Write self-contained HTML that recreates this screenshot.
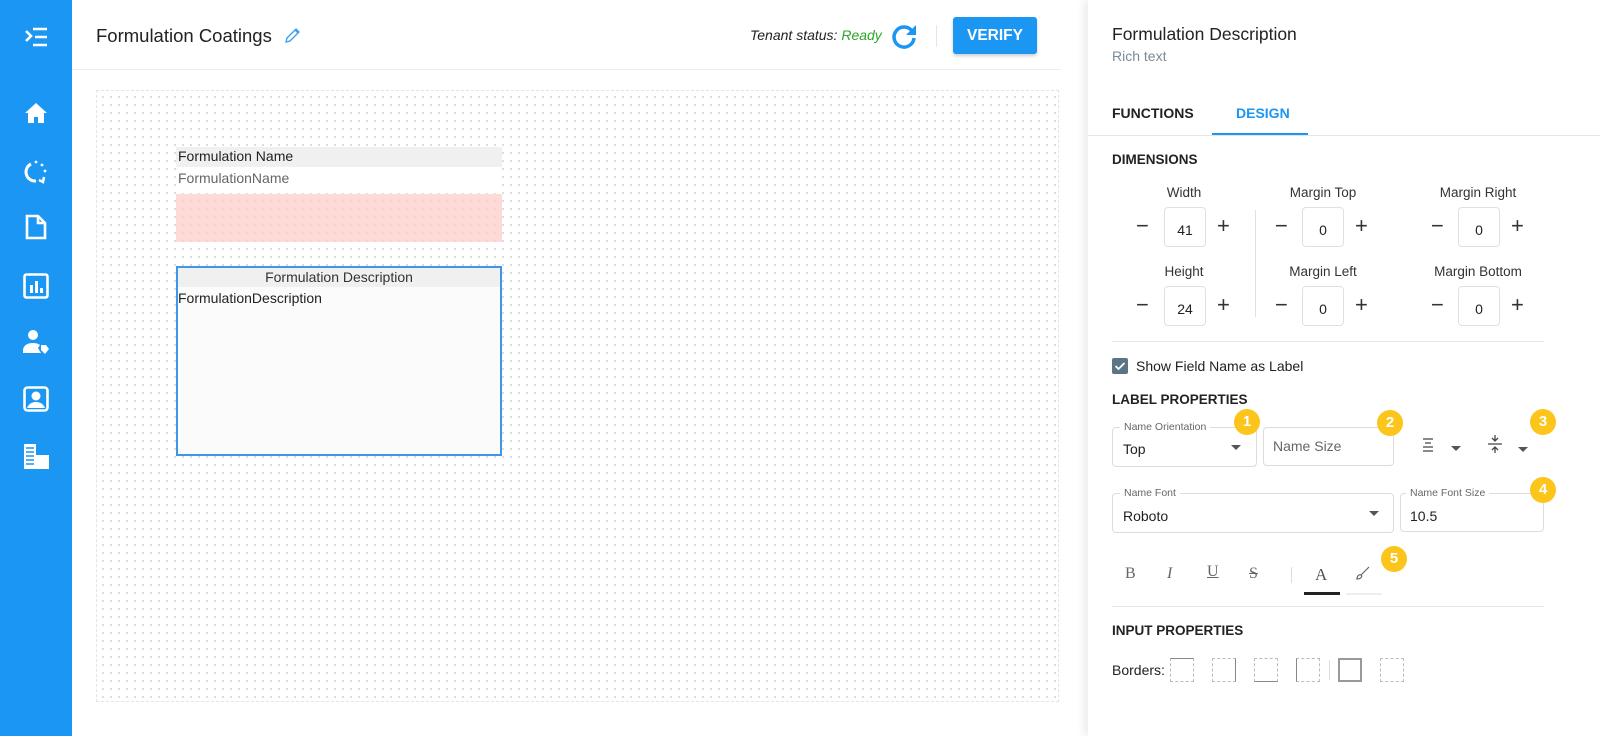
<!DOCTYPE html>
<html><head><meta charset="utf-8"><style>
*{box-sizing:border-box;margin:0;padding:0}
body{width:1600px;height:736px;overflow:hidden;font-family:"Liberation Sans",sans-serif;background:#fff;position:relative;color:#222}
.a{position:absolute}
.side{left:0;top:0;width:72px;height:736px;background:#1c96f3}
.canvas{left:96px;top:90px;width:963px;height:612px;border:1px dashed #e4e4e4;background-image:radial-gradient(circle,#d4d4d4 0.8px,transparent 1.1px);background-size:8px 8px;background-position:2px 2px}
.panel{left:1088px;top:0;width:512px;height:736px;background:#fff;box-shadow:-4px 0 8px rgba(0,0,0,.08)}
.lbl{font-size:13.5px;color:#333;text-align:center;width:120px}
.box{width:42px;height:40px;border:1px solid #e0e0e0;border-radius:4px;font-size:14px;text-align:center;line-height:44px;color:#222}
.pm{font-size:22px;color:#333;font-weight:300}
.h{font-size:13.5px;font-weight:bold;color:#222}
.fld{border:1px solid #dcdcdc;border-radius:4px}
.fl{font-size:10.5px;color:#666;background:#fff;padding:0 4px}
.badge{width:26px;height:26px;border-radius:13px;background:#fbc51b;color:#fff;font-weight:bold;font-size:15px;text-align:center;line-height:26px}
.tri{width:0;height:0;border-left:5px solid transparent;border-right:5px solid transparent;border-top:5px solid #555}
.bd{width:24px;height:24px;border:1px dashed #bbb}
</style></head><body>
<div class="a side"></div>
<svg class="a" style="left:22px;top:26px" width="28" height="22" viewBox="0 0 28 22" fill="none" stroke="#fff" stroke-width="2.6"><path d="M4 5l5 5-5 5"/><path d="M11 3h14M13 11h12M11 19h14"/></svg>
<svg class="a" style="left:24px;top:101px" width="24" height="24" viewBox="0 0 24 24"><path d="M12 2L1 12h3v10h6v-6h4v6h6V12h3z" fill="#fff"/></svg>
<svg class="a" style="left:23px;top:159px" width="26" height="26" viewBox="0 0 26 26" fill="none" stroke="#fff" stroke-width="3"><path d="M8 5A9 9 0 0 0 13 22"/><circle cx="13" cy="3" r="1.4" fill="#fff" stroke="none"/><circle cx="19" cy="6" r="1.4" fill="#fff" stroke="none"/><circle cx="22" cy="12" r="1.4" fill="#fff" stroke="none"/><path d="M16 21l4 2 1-5" stroke-width="2.5"/></svg>
<svg class="a" style="left:25px;top:214px" width="22" height="26" viewBox="0 0 22 26" fill="none" stroke="#fff" stroke-width="2.6"><path d="M2 2h11l7 7v15H2z"/><path d="M13 2v7h7"/></svg>
<svg class="a" style="left:23px;top:273px" width="26" height="26" viewBox="0 0 26 26"><rect x="1.5" y="1.5" width="23" height="23" rx="2" fill="none" stroke="#fff" stroke-width="2.6"/><path d="M7 12h3v8H7zM12 8h3v12h-3zM17 15h3v5h-3z" fill="#fff"/></svg>
<svg class="a" style="left:22px;top:329px" width="28" height="26" viewBox="0 0 28 26" fill="#fff"><circle cx="11" cy="6" r="5"/><path d="M1 22c0-6 5-8 10-8 3 0 5 .5 7 2l-2 3 3 5H1z"/><path d="M19 16l5 0 3 4-4 5-4-4z"/></svg>
<svg class="a" style="left:23px;top:386px" width="26" height="26" viewBox="0 0 26 26"><rect x="1.5" y="1.5" width="23" height="23" rx="3" fill="none" stroke="#fff" stroke-width="2.6"/><circle cx="13" cy="10" r="4.5" fill="#fff"/><path d="M4 22c2-5 6-6 9-6s7 1 9 6z" fill="#fff"/></svg>
<svg class="a" style="left:24px;top:444px" width="26" height="26" viewBox="0 0 26 26" fill="#fff"><path d="M0 0h12v25H0z"/><path d="M12 11h13v14H12z"/><path d="M2 4h8M2 8h8M2 12h8M2 16h8M2 20h8" stroke="#1c96f3" stroke-width="1.4"/></svg>

<div class="a" style="left:96px;top:25px;font-size:18.5px;color:#222">Formulation Coatings</div>
<svg class="a" style="left:284px;top:27px" width="16" height="17" viewBox="0 0 16 17" fill="none" stroke="#3a9bf0" stroke-width="1.3"><path d="M2 15l1-4 9-9 3 3-9 9z M11 3l3 3"/></svg>
<div class="a" style="left:750px;top:27px;font-size:14px;font-style:italic;color:#222">Tenant status: <span style="color:#2aa52a">Ready</span></div>
<svg class="a" style="left:890px;top:22px" width="28" height="28" viewBox="0 0 28 28" fill="none"><path d="M22 9A10 10 0 1 0 24 16" stroke="#1c96f3" stroke-width="3.5"/><path d="M26 3v10H16z" fill="#1c96f3"/></svg>
<div class="a" style="left:936px;top:25px;width:1px;height:22px;background:#e6e6e6"></div>
<div class="a" style="left:953px;top:17px;width:84px;height:37px;background:#1c96f3;border-radius:3px;color:#fff;font-weight:bold;font-size:15.5px;text-align:center;line-height:37px;box-shadow:0 2px 3px rgba(0,0,0,.2)">VERIFY</div>
<div class="a" style="left:72px;top:69px;width:989px;height:1px;background:#ececec"></div>

<div class="a canvas"></div>
<div class="a" style="left:176px;top:147px;width:326px;height:20px;background:#eff0ef;font-size:14px;line-height:19px;padding-left:2px">Formulation Name</div>
<div class="a" style="left:176px;top:167px;width:326px;height:26px;background:#fff;font-size:14px;color:#666;line-height:22px;padding-left:2px">FormulationName</div>
<div class="a" style="left:176px;top:194px;width:326px;height:48px;background:rgba(253,205,200,.75)"></div>
<div class="a" style="left:176px;top:266px;width:326px;height:190px;border:2px solid #3f95e8;background:#fbfbfb">
<div style="height:19px;background:#eff0ef;font-size:14px;text-align:center;line-height:18px;color:#333">Formulation Description</div>
<div style="font-size:14px;line-height:22px;padding-left:0">FormulationDescription</div></div>

<div class="a panel"></div>
<div class="a" style="left:1112px;top:24px;font-size:17.5px;color:#222">Formulation Description</div>
<div class="a" style="left:1112px;top:48px;font-size:14px;color:#7a8b99">Rich text</div>
<div class="a" style="left:1112px;top:105px;font-size:14px;font-weight:bold;color:#222">FUNCTIONS</div>
<div class="a" style="left:1236px;top:105px;font-size:14px;font-weight:bold;color:#1c96f3">DESIGN</div>
<div class="a" style="left:1212px;top:133px;width:96px;height:2px;background:#1c96f3"></div>
<div class="a" style="left:1088px;top:135px;width:512px;height:1px;background:#e6e6e6"></div>
<div class="a h" style="left:1112px;top:152px">DIMENSIONS</div>

<div class="a lbl" style="left:1124px;top:185px">Width</div>
<div class="a lbl" style="left:1263px;top:185px">Margin Top</div>
<div class="a lbl" style="left:1418px;top:185px">Margin Right</div>
<div class="a lbl" style="left:1124px;top:264px">Height</div>
<div class="a lbl" style="left:1263px;top:264px">Margin Left</div>
<div class="a lbl" style="left:1418px;top:264px">Margin Bottom</div>
<div class="a box" style="left:1164px;top:207px">41</div>
<div class="a box" style="left:1302px;top:207px">0</div>
<div class="a box" style="left:1458px;top:207px">0</div>
<div class="a box" style="left:1164px;top:286px">24</div>
<div class="a box" style="left:1302px;top:286px">0</div>
<div class="a box" style="left:1458px;top:286px">0</div>
<div class="a pm" style="left:1136px;top:213px">−</div><div class="a pm" style="left:1217px;top:213px">+</div>
<div class="a pm" style="left:1275px;top:213px">−</div><div class="a pm" style="left:1355px;top:213px">+</div>
<div class="a pm" style="left:1431px;top:213px">−</div><div class="a pm" style="left:1511px;top:213px">+</div>
<div class="a pm" style="left:1136px;top:292px">−</div><div class="a pm" style="left:1217px;top:292px">+</div>
<div class="a pm" style="left:1275px;top:292px">−</div><div class="a pm" style="left:1355px;top:292px">+</div>
<div class="a pm" style="left:1431px;top:292px">−</div><div class="a pm" style="left:1511px;top:292px">+</div>
<div class="a" style="left:1255px;top:210px;width:1px;height:107px;background:#e0e0e0"></div>
<div class="a" style="left:1112px;top:341px;width:432px;height:1px;background:#e6e6e6"></div>
<div class="a" style="left:1112px;top:358px;width:16px;height:16px;background:#5b7585;border-radius:2px"><svg width="16" height="16"><path d="M3.5 8l3 3 6-6" stroke="#fff" stroke-width="1.8" fill="none"/></svg></div>
<div class="a" style="left:1136px;top:358px;font-size:14px">Show Field Name as Label</div>
<div class="a h" style="left:1112px;top:392px">LABEL PROPERTIES</div>

<div class="a fld" style="left:1112px;top:427px;width:145px;height:40px"></div>
<div class="a fl" style="left:1120px;top:421px">Name Orientation</div>
<div class="a" style="left:1123px;top:441px;font-size:14px">Top</div>
<div class="a tri" style="left:1231px;top:445px"></div>
<div class="a fld" style="left:1263px;top:427px;width:131px;height:39px"></div>
<div class="a" style="left:1273px;top:438px;font-size:14px;color:#666">Name Size</div>
<svg class="a" style="left:1420px;top:437px" width="16" height="16" viewBox="0 0 16 16" stroke="#444" stroke-width="1.3"><path d="M3 2h10M5 6h6M3 10h10M3 14h10"/></svg>
<div class="a tri" style="left:1451px;top:446px"></div>
<svg class="a" style="left:1487px;top:435px" width="16" height="18" viewBox="0 0 16 18" stroke="#444" stroke-width="1.3" fill="none"><path d="M1 9h14M8 0v6M5 3l3 3 3-3M8 18v-6M5 15l3-3 3 3"/></svg>
<div class="a tri" style="left:1518px;top:447px"></div>
<div class="a badge" style="left:1234px;top:409px">1</div>
<div class="a badge" style="left:1377px;top:410px">2</div>
<div class="a badge" style="left:1530px;top:409px">3</div>

<div class="a fld" style="left:1112px;top:493px;width:282px;height:40px"></div>
<div class="a fl" style="left:1120px;top:487px">Name Font</div>
<div class="a" style="left:1123px;top:508px;font-size:14px">Roboto</div>
<div class="a tri" style="left:1369px;top:511px"></div>
<div class="a fld" style="left:1400px;top:493px;width:144px;height:39px"></div>
<div class="a fl" style="left:1406px;top:487px">Name Font Size</div>
<div class="a" style="left:1410px;top:508px;font-size:14px">10.5</div>
<div class="a badge" style="left:1530px;top:477px">4</div>

<div class="a" style="left:1125px;top:565px;font-family:'Liberation Serif',serif;font-size:16px;color:#666">B</div>
<div class="a" style="left:1167px;top:565px;font-family:'Liberation Serif',serif;font-size:16px;font-style:italic;color:#666">I</div>
<div class="a" style="left:1207px;top:563px;font-family:'Liberation Serif',serif;font-size:16px;text-decoration:underline;color:#666">U</div>
<div class="a" style="left:1249px;top:565px;font-family:'Liberation Serif',serif;font-size:16px;text-decoration:line-through;color:#666">S</div>
<div class="a" style="left:1291px;top:567px;width:1px;height:16px;background:#ddd"></div>
<div class="a" style="left:1315px;top:565px;font-family:'Liberation Serif',serif;font-size:17px;color:#555">A</div>
<div class="a" style="left:1304px;top:592px;width:36px;height:3px;background:#222"></div>
<svg class="a" style="left:1355px;top:565px" width="16" height="16" viewBox="0 0 16 16" fill="none" stroke="#666" stroke-width="1.2"><path d="M14 2l-8 8M2 14c0-3 2-5 4-4s0 4-4 4z"/></svg>
<div class="a" style="left:1346px;top:593px;width:36px;height:2px;background:#eee"></div>
<div class="a badge" style="left:1381px;top:546px">5</div>
<div class="a" style="left:1112px;top:606px;width:432px;height:1px;background:#e6e6e6"></div>
<div class="a h" style="left:1112px;top:623px">INPUT PROPERTIES</div>
<div class="a" style="left:1112px;top:662px;font-size:14px">Borders:</div>
<div class="a bd" style="left:1170px;top:658px;border-top:1px solid #888"></div>
<div class="a bd" style="left:1212px;top:658px;border-right:1px solid #888"></div>
<div class="a bd" style="left:1254px;top:658px;border-bottom:1px solid #888"></div>
<div class="a bd" style="left:1296px;top:658px;border-left:1px solid #888"></div>
<div class="a" style="left:1329px;top:660px;width:1px;height:20px;background:#ddd"></div>
<div class="a" style="left:1338px;top:658px;width:24px;height:24px;border:2px solid #999"></div>
<div class="a bd" style="left:1380px;top:658px"></div>
</body></html>
